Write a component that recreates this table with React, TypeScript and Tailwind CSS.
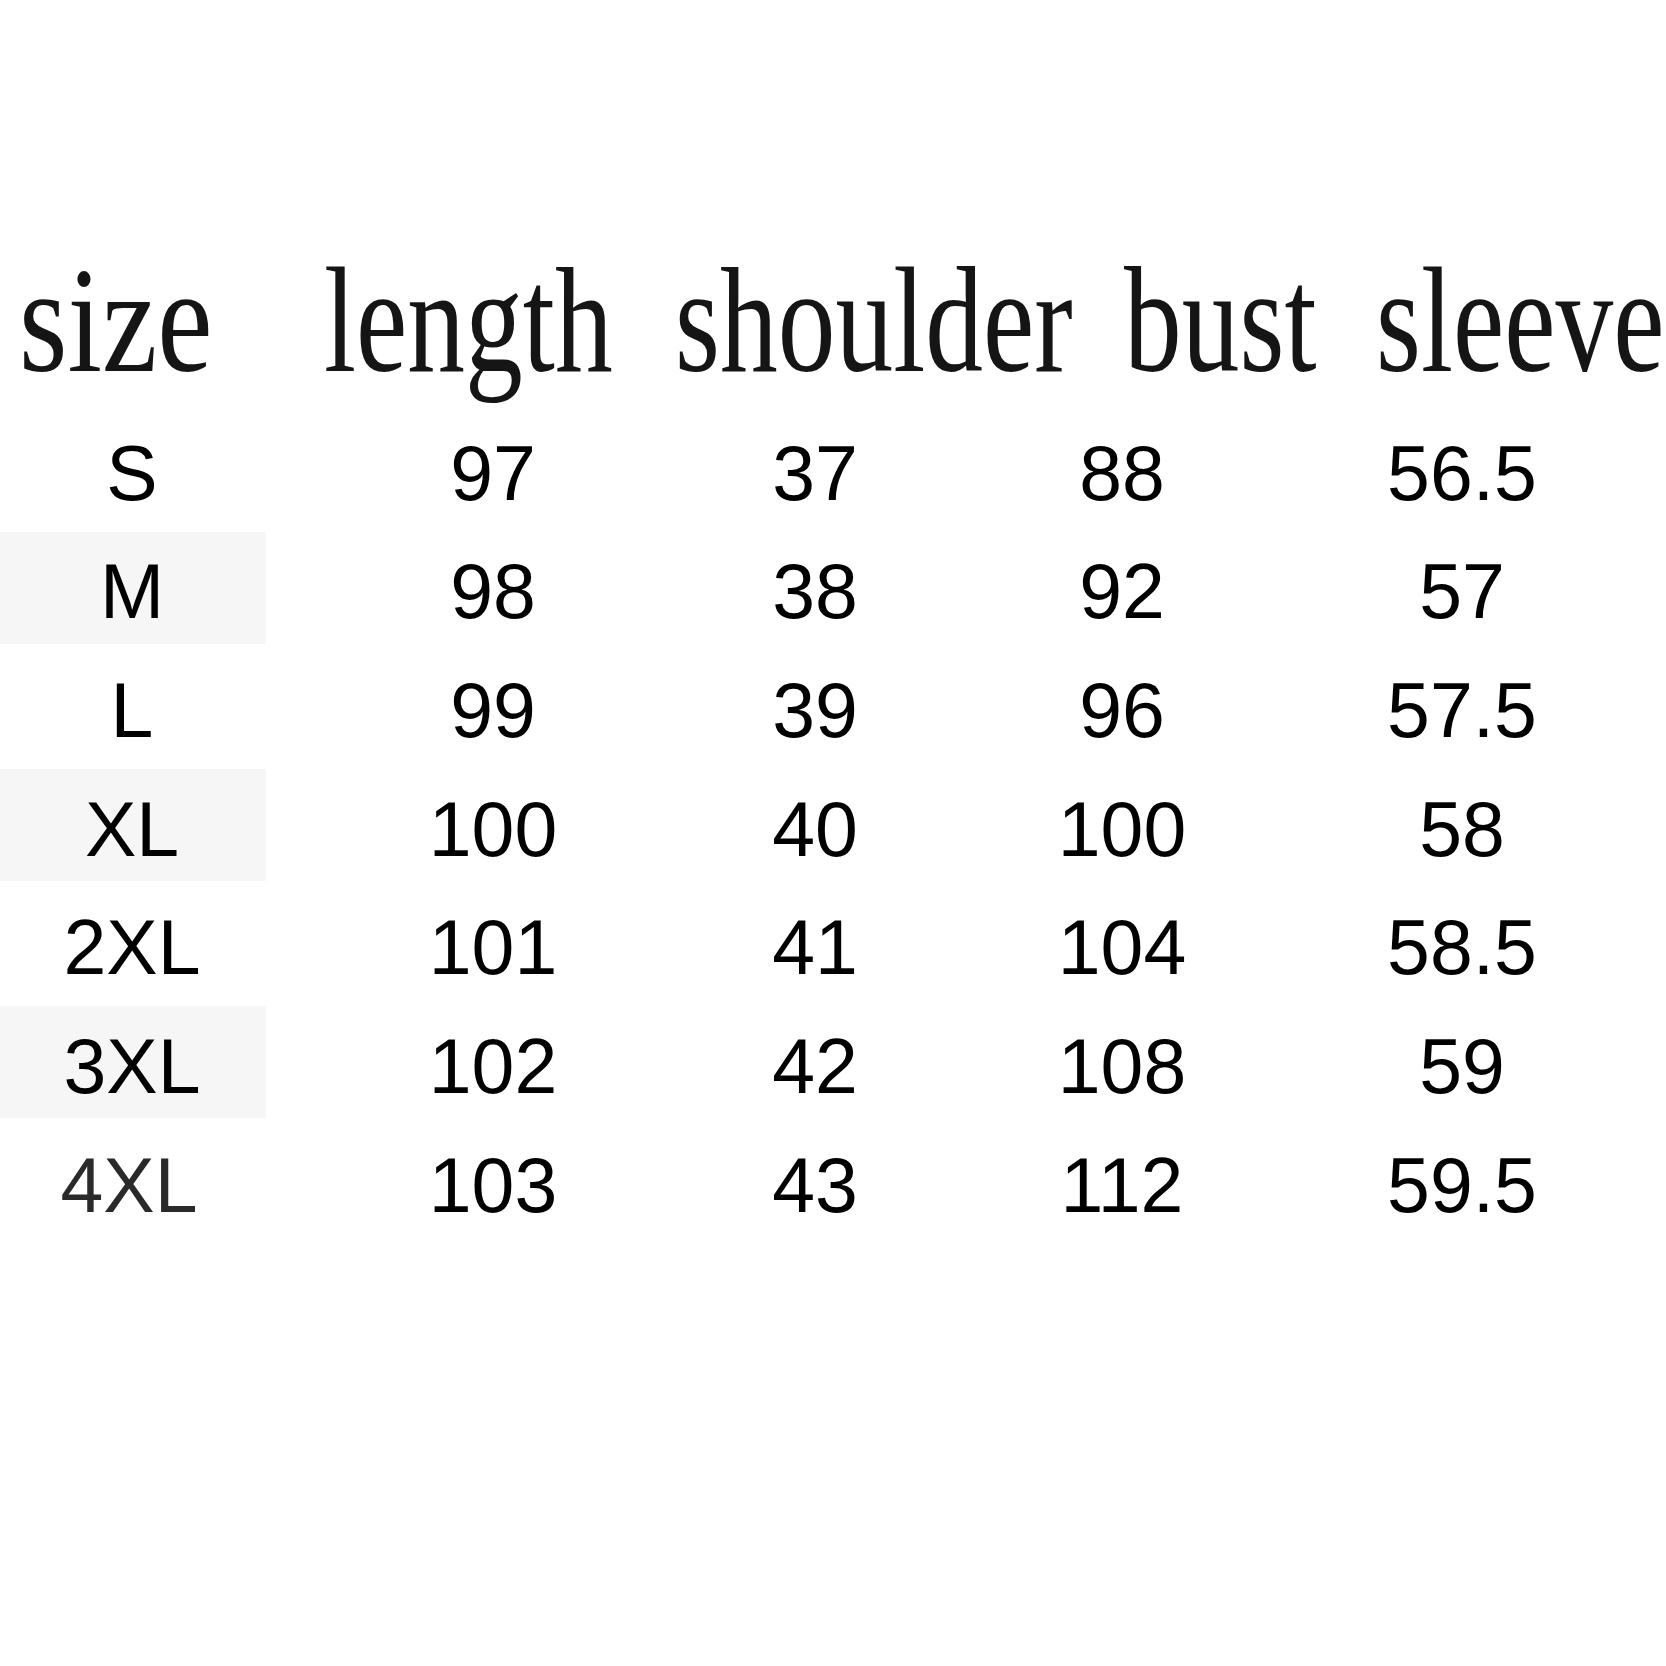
const rows = [
  { size: "S", length: "97", shoulder: "37", bust: "88", sleeve: "56.5", band: false },
  { size: "M", length: "98", shoulder: "38", bust: "92", sleeve: "57", band: true },
  { size: "L", length: "99", shoulder: "39", bust: "96", sleeve: "57.5", band: false },
  { size: "XL", length: "100", shoulder: "40", bust: "100", sleeve: "58", band: true },
  { size: "2XL", length: "101", shoulder: "41", bust: "104", sleeve: "58.5", band: false },
  { size: "3XL", length: "102", shoulder: "42", bust: "108", sleeve: "59", band: true },
  { size: "4XL", length: "103", shoulder: "43", bust: "112", sleeve: "59.5", band: false },
]

const HeaderWord = ({ children, wide }: { children: string; wide?: boolean }) => (
  <div className="whitespace-nowrap">
    <span className={`inline-block origin-left ${wide ? "scale-x-[0.83]" : "scale-x-[0.77]"}`}>{children}</span>
  </div>
)

export default function App() {
  return (
    <div className="w-[1666px] h-[1666px] bg-white overflow-hidden text-black">
      <div
        className="mt-[245px] pl-[19px] grid grid-cols-[305px_351px_449px_252px_1fr] text-[150px] leading-none text-[#151515]"
        style={{ fontFamily: '"Liberation Serif", "Times New Roman", serif' }}
      >
        <HeaderWord wide>size</HeaderWord>
        <HeaderWord>length</HeaderWord>
        <HeaderWord>shoulder</HeaderWord>
        <HeaderWord>bust</HeaderWord>
        <HeaderWord>sleeve</HeaderWord>
      </div>

      <div
        className="mt-[19px] flex flex-col text-[77px]"
        style={{ fontFamily: '"Liberation Sans", Arial, sans-serif' }}
      >
        {rows.map((r) => (
          <div key={r.size} className="grid grid-cols-[264px_458px_186px_428px_252px] h-[118.7px]">
            <div className="relative flex items-center justify-center">
              {r.band && <div className="absolute left-0 top-[-1px] w-[266px] h-[112px] bg-[#f6f6f6]" />}
              <span className={`relative ${r.size === "4XL" ? "text-[#2a2a2a] -ml-[6px]" : ""}`}>{r.size}</span>
            </div>
            <div className="flex items-center justify-center">{r.length}</div>
            <div className="flex items-center justify-center">{r.shoulder}</div>
            <div className="flex items-center justify-center">{r.bust}</div>
            <div className="flex items-center justify-center">{r.sleeve}</div>
          </div>
        ))}
      </div>
    </div>
  )
}
